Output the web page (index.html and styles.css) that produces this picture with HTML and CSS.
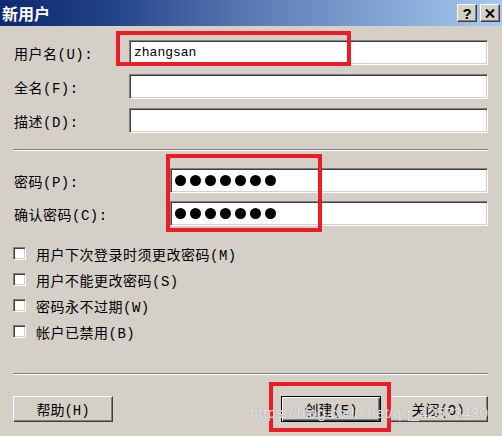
FILE: index.html
```html
<!DOCTYPE html>
<html lang="zh-CN">
<head>
    <meta charset="UTF-8">
    <title>新用户</title>
    <link rel="stylesheet" href="styles.css">
</head>
<body>
    <div class="window">
        <div class="titlebar">
            <span class="title">新用户</span>
            <div class="caption-btns">
                <span class="cap-btn">?</span>
                <span class="cap-btn">
                    <svg width="10" height="9" viewBox="0 0 10 9"><path d="M1 0.5 L9 8.5 M9 0.5 L1 8.5" stroke="#000" stroke-width="2" fill="none"/></svg>
                </span>
            </div>
        </div>

        <div class="content">
            <div class="field">
                <label>用户名(U):</label>
                <div class="textbox">zhangsan</div>
            </div>
            <div class="field">
                <label>全名(F):</label>
                <div class="textbox"></div>
            </div>
            <div class="field">
                <label>描述(D):</label>
                <div class="textbox"></div>
            </div>

            <div class="sep sep-top"></div>

            <div class="field pw first-pw">
                <label>密码(P):</label>
                <div class="textbox"><span class="dot"></span><span class="dot"></span><span class="dot"></span><span class="dot"></span><span class="dot"></span><span class="dot"></span><span class="dot"></span></div>
            </div>
            <div class="field pw">
                <label>确认密码(C):</label>
                <div class="textbox"><span class="dot"></span><span class="dot"></span><span class="dot"></span><span class="dot"></span><span class="dot"></span><span class="dot"></span><span class="dot"></span></div>
            </div>

            <div class="checks">
                <div class="check"><span class="box"></span><span>用户下次登录时须更改密码(M)</span></div>
                <div class="check"><span class="box"></span><span>用户不能更改密码(S)</span></div>
                <div class="check"><span class="box"></span><span>密码永不过期(W)</span></div>
                <div class="check"><span class="box"></span><span>帐户已禁用(B)</span></div>
            </div>

            <div class="sep sep-bottom"></div>

            <div class="buttons">
                <div class="btn">帮助(H)</div>
                <div class="spacer"></div>
                <div class="btn default">创建(E)</div>
                <div class="btn">关闭(O)</div>
            </div>
        </div>

        <!-- 标注框 -->
        <div class="mark mark-user"></div>
        <div class="mark mark-pw"></div>
        <div class="mark mark-create"></div>
        <div class="watermark">https://blog.csdn.net/qq_42573430</div>
    </div>
</body>
</html>
```

FILE: styles.css
```css
body {
    margin: 0;
    background-color: #d4d0c8;
    font-family: "Liberation Mono", "Noto Sans CJK SC", monospace;
    font-size: 14px;
    color: #000;
}
.window {
    position: relative;
    width: 502px;
    height: 436px;
    overflow: hidden;
}
.titlebar {
    height: 26px;
    display: flex;
    align-items: center;
    justify-content: space-between;
    background: linear-gradient(to right, #0f2a6e, #1f3f86 20%, #5a7ab4 50%, #a6caf0);
}
.title {
    color: #fff;
    font-family: "Noto Sans CJK SC", sans-serif;
    font-weight: bold;
    font-size: 16px;
    padding-left: 2px;
}
.caption-btns {
    display: flex;
    gap: 3px;
    padding-right: 2px;
}
.cap-btn {
    width: 20px;
    height: 18px;
    box-sizing: border-box;
    display: flex;
    align-items: center;
    justify-content: center;
    background-color: #d4d0c8;
    border-top: 1px solid #fff;
    border-left: 1px solid #fff;
    border-right: 1px solid #404040;
    border-bottom: 1px solid #404040;
    box-shadow: inset -1px -1px 0 #808080;
    font-family: "Liberation Sans", sans-serif;
    font-weight: bold;
    font-size: 15px;
}
.content {
    padding: 14px 14px 0 13px;
}
.field {
    display: flex;
    align-items: center;
    height: 25px;
    margin-bottom: 9px;
}
.field label {
    width: 115px;
    padding-left: 1px;
    letter-spacing: 0.5px;
}
.field.pw label {
    width: 156px;
}
.field.pw {
    margin-bottom: 8px;
}
.first-pw {
    margin-top: 17px;
}
.textbox {
    flex: 1;
    height: 25px;
    box-sizing: border-box;
    background-color: #fff;
    border-top: 1px solid #808080;
    border-left: 1px solid #808080;
    border-right: 1px solid #fff;
    border-bottom: 1px solid #fff;
    box-shadow: inset 1px 1px 0 #404040, inset -1px -1px 0 #d4d0c8;
    padding: 0 4px;
    display: flex;
    align-items: center;
    gap: 4px;
    font-size: 13px;
}
.dot {
    width: 11px;
    height: 11px;
    border-radius: 50%;
    background-color: #000;
}
.sep {
    border-top: 1px solid #808080;
    border-bottom: 1px solid #fff;
    height: 0;
}
.sep-top {
    margin-top: 16px;
}
.checks {
    margin-top: 21px;
    display: flex;
    flex-direction: column;
    gap: 13px;
}
.check {
    display: flex;
    align-items: center;
    height: 13px;
    letter-spacing: 0.5px;
}
.box {
    width: 13px;
    height: 13px;
    box-sizing: border-box;
    margin-right: 10px;
    background-color: #fff;
    border-top: 1px solid #808080;
    border-left: 1px solid #808080;
    border-right: 1px solid #fff;
    border-bottom: 1px solid #fff;
    box-shadow: inset 1px 1px 0 #404040, inset -1px -1px 0 #d4d0c8;
}
.sep-bottom {
    margin-top: 35px;
}
.buttons {
    margin-top: 21px;
    display: flex;
    gap: 7px;
}
.spacer {
    flex: 1;
}
.btn {
    width: 100px;
    height: 26px;
    box-sizing: border-box;
    display: flex;
    align-items: center;
    justify-content: center;
    border-top: 1px solid #fff;
    border-left: 1px solid #fff;
    border-right: 1px solid #404040;
    border-bottom: 1px solid #404040;
    box-shadow: inset -1px -1px 0 #808080;
}
.btn.default {
    border: 1px solid #000;
    box-shadow: inset 1px 1px 0 #fff, inset -1px -1px 0 #404040, inset -2px -2px 0 #808080;
}
.mark {
    position: absolute;
    border: 4px solid #ed1c24;
    box-sizing: border-box;
}
.mark-user {
    left: 116px;
    top: 31px;
    width: 235px;
    height: 35px;
}
.mark-pw {
    left: 166px;
    top: 154px;
    width: 156px;
    height: 78px;
}
.mark-create {
    left: 269px;
    top: 382px;
    width: 122px;
    height: 50px;
}
.watermark {
    position: absolute;
    left: 250px;
    top: 405px;
    font-family: "Liberation Sans", sans-serif;
    font-size: 15.5px;
    line-height: 1;
    color: rgba(255, 255, 255, 0.75);
    text-shadow: 0 0 1px #8a8a8a;
}
```
